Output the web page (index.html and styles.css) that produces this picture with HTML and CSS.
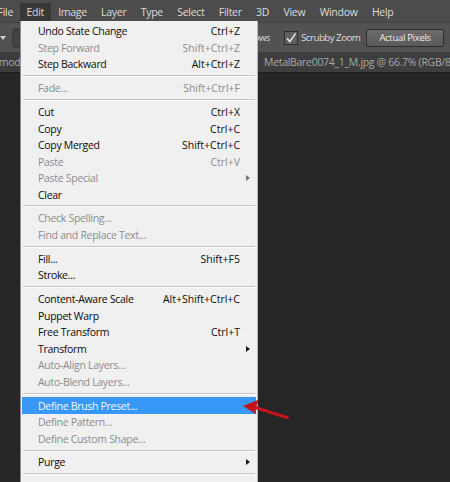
FILE: index.html
```html
<!DOCTYPE html>
<html>
<head>
<meta charset="utf-8">
<link rel="stylesheet" href="styles.css">
</head>
<body>
<div class="app">
  <div class="menubar">
    <span class="mb-item mb-file">File</span>
    <span class="mb-item mb-edit active">Edit</span>
    <span class="mb-item">Image</span>
    <span class="mb-item">Layer</span>
    <span class="mb-item">Type</span>
    <span class="mb-item">Select</span>
    <span class="mb-item">Filter</span>
    <span class="mb-item">3D</span>
    <span class="mb-item">View</span>
    <span class="mb-item">Window</span>
    <span class="mb-item">Help</span>
  </div>
  <div class="optbar">
    <div class="opt-left">
      <span class="opt-drop"></span>
      <span class="opt-tool"></span>
    </div>
    <span class="opt-windows">Zoom All Windows</span>
    <span class="checkbox">
      <svg width="12" height="12" viewBox="0 0 12 12"><path d="M2 6.2 L4.8 9.6 L10.6 1.4" fill="none" stroke="#e2e2e2" stroke-width="1.6"/></svg>
    </span>
    <span class="opt-label">Scrubby Zoom</span>
    <span class="btn">Actual Pixels</span>
    <span class="btn">Fit Screen</span>
  </div>
  <div class="tabbar">
    <span class="tab tab-prev">Untitled-1 @ 100% (RGB/8) mode</span>
    <span class="tab tab-cur">MetalBare0074_1_M.jpg @ 66.7% (RGB/8#)</span>
  </div>
  <div class="canvas"></div>

  <div class="dropdown">
    <div class="mi"><span class="lb">Undo State Change</span><span class="sc">Ctrl+Z</span><span></span></div>
    <div class="mi dis"><span class="lb">Step Forward</span><span class="sc">Shift+Ctrl+Z</span><span></span></div>
    <div class="mi"><span class="lb">Step Backward</span><span class="sc">Alt+Ctrl+Z</span><span></span></div>
    <div class="sep"></div>
    <div class="mi dis"><span class="lb">Fade...</span><span class="sc">Shift+Ctrl+F</span><span></span></div>
    <div class="sep"></div>
    <div class="mi"><span class="lb">Cut</span><span class="sc">Ctrl+X</span><span></span></div>
    <div class="mi"><span class="lb">Copy</span><span class="sc">Ctrl+C</span><span></span></div>
    <div class="mi"><span class="lb">Copy Merged</span><span class="sc">Shift+Ctrl+C</span><span></span></div>
    <div class="mi dis"><span class="lb">Paste</span><span class="sc">Ctrl+V</span><span></span></div>
    <div class="mi dis"><span class="lb">Paste Special</span><span class="sc"></span><span class="arrow"></span></div>
    <div class="mi"><span class="lb">Clear</span><span class="sc"></span><span></span></div>
    <div class="sep"></div>
    <div class="mi dis"><span class="lb">Check Spelling...</span><span class="sc"></span><span></span></div>
    <div class="mi dis"><span class="lb">Find and Replace Text...</span><span class="sc"></span><span></span></div>
    <div class="sep"></div>
    <div class="mi"><span class="lb">Fill...</span><span class="sc">Shift+F5</span><span></span></div>
    <div class="mi"><span class="lb">Stroke...</span><span class="sc"></span><span></span></div>
    <div class="sep"></div>
    <div class="mi"><span class="lb">Content-Aware Scale</span><span class="sc">Alt+Shift+Ctrl+C</span><span></span></div>
    <div class="mi"><span class="lb">Puppet Warp</span><span class="sc"></span><span></span></div>
    <div class="mi"><span class="lb">Free Transform</span><span class="sc">Ctrl+T</span><span></span></div>
    <div class="mi"><span class="lb">Transform</span><span class="sc"></span><span class="arrow"></span></div>
    <div class="mi dis"><span class="lb">Auto-Align Layers...</span><span class="sc"></span><span></span></div>
    <div class="mi dis"><span class="lb">Auto-Blend Layers...</span><span class="sc"></span><span></span></div>
    <div class="sep"></div>
    <div class="mi hl"><span class="lb">Define Brush Preset...</span><span class="sc"></span><span></span></div>
    <div class="mi dis"><span class="lb">Define Pattern...</span><span class="sc"></span><span></span></div>
    <div class="mi dis"><span class="lb">Define Custom Shape...</span><span class="sc"></span><span></span></div>
    <div class="sep"></div>
    <div class="mi"><span class="lb">Purge</span><span class="sc"></span><span class="arrow"></span></div>
    <div class="sep"></div>
    <div class="mi"><span class="lb">Adobe PDF Presets...</span><span class="sc"></span><span></span></div>
  </div>

  <svg class="redarrow" width="60" height="30" viewBox="0 0 60 30">
    <path d="M1 8 L17 1.5 L14.5 8.2 L47 18.5 L46 21.5 L13.5 11.2 L14 16 Z" fill="#c3141b"/>
  </svg>
</div>
</body>
</html>
```
FILE: styles.css
```css
html, body {
  margin: 0;
  padding: 0;
}
body {
  width: 450px;
  height: 482px;
  overflow: hidden;
  background: #252525;
  font-family: "Open Sans", "Noto Sans", sans-serif;
}
.app {
  position: relative;
  width: 450px;
  height: 482px;
  overflow: hidden;
  display: flex;
  flex-direction: column;
}
.menubar {
  height: 22px;
  flex: none;
  background: #4c4c4c;
  display: flex;
  align-items: stretch;
  color: #dcdcdc;
  font-size: 10.5px;
  letter-spacing: -0.3px;
  white-space: nowrap;
}
.mb-item {
  display: flex;
  align-items: center;
  padding: 0 7.2px;
  margin-top: 3px;
  padding-bottom: 1px;
}
.mb-file {
  width: 20px;
  flex: none;
  box-sizing: border-box;
  padding: 0 7px 1px 0;
  justify-content: flex-end;
  overflow: hidden;
}
.mb-edit.active {
  background: #383838;
  padding-left: 6.5px;
  padding-right: 7px;
}
.optbar {
  height: 30px;
  flex: none;
  background: #525252;
  border-top: 1px solid #454545;
  box-sizing: border-box;
  display: flex;
  align-items: center;
  color: #dedede;
  font-size: 9.8px;
  letter-spacing: -0.55px;
  white-space: nowrap;
  overflow: hidden;
}
.opt-left {
  width: 250px;
  flex: none;
  display: flex;
  align-items: center;
}
.opt-drop {
  width: 0;
  height: 0;
  border-left: 3.5px solid transparent;
  border-right: 3.5px solid transparent;
  border-top: 4px solid #d0d0d0;
}
.opt-tool {
  width: 16px;
  height: 18px;
  border-radius: 3px;
  background: #424242;
  border: 1px solid #3a3a3a;
  margin-left: 6px;
}
.opt-windows {
  width: 20px;
  flex: none;
  display: flex;
  justify-content: flex-end;
  overflow: hidden;
}
.checkbox {
  width: 12px;
  height: 12px;
  flex: none;
  border: 1px solid #2e2e2e;
  background: #5f5f5f;
  margin-left: 14px;
  margin-right: 3px;
  display: flex;
  align-items: center;
  justify-content: center;
}
.opt-label {
  flex: none;
}
.btn {
  flex: none;
  height: 16px;
  padding: 0 12px;
  margin-left: 6px;
  border: 1px solid #2f2f2f;
  border-radius: 2px;
  background: linear-gradient(#6b6b6b, #5a5a5a);
  color: #ececec;
  font-size: 9.5px;
  letter-spacing: -0.3px;
  display: flex;
  align-items: center;
}
.btn + .btn {
  margin-left: 7px;
}
.tabbar {
  height: 20px;
  flex: none;
  background: #3c3c3c;
  display: flex;
  align-items: center;
  color: #a6a6a6;
  font-size: 10.5px;
  letter-spacing: -0.3px;
  overflow: hidden;
  white-space: nowrap;
}
.tab {
  height: 100%;
  display: flex;
  align-items: center;
}
.tab-prev {
  width: 26px;
  flex: none;
  justify-content: flex-end;
  overflow: hidden;
}
.tab-cur {
  padding-left: 238px;
  background: #3e3e3e;
}
.canvas {
  flex: 1;
  background: #262626;
  border-top: 1px solid #1c1c1c;
}

.dropdown {
  position: absolute;
  left: 20px;
  top: 21px;
  width: 236px;
  height: 480px;
  background: #f0f0f0;
  border-left: 1px solid #8e8e8e;
  border-right: 1px solid #b8b8b8;
  padding-top: 2px;
  font-size: 10.5px;
  color: #0c0c0c;
}
.mi {
  height: 16.5px;
  display: grid;
  grid-template-columns: 1fr auto 16px;
  align-items: center;
  padding-left: 16px;
  margin: 0 1px;
  white-space: nowrap;
}
.lb {
  letter-spacing: -0.3px;
}
.mi.dis {
  color: #8c8c8c;
}
.mi.hl {
  background: #3798f8;
  color: #f4f9ff;
}
.sep {
  height: 7.4px;
  display: flex;
  align-items: center;
  padding: 0 2px;
}
.sep::before {
  content: "";
  display: block;
  width: 100%;
  height: 1px;
  background: #c4c4c4;
  border-bottom: 1px solid #fbfbfb;
}
.arrow {
  justify-self: center;
  width: 0;
  height: 0;
  border-top: 3.5px solid transparent;
  border-bottom: 3.5px solid transparent;
  border-left: 4px solid #1a1a1a;
}
.mi.dis .arrow {
  border-left-color: #777;
}
.redarrow {
  position: absolute;
  left: 242px;
  top: 398px;
}
```
